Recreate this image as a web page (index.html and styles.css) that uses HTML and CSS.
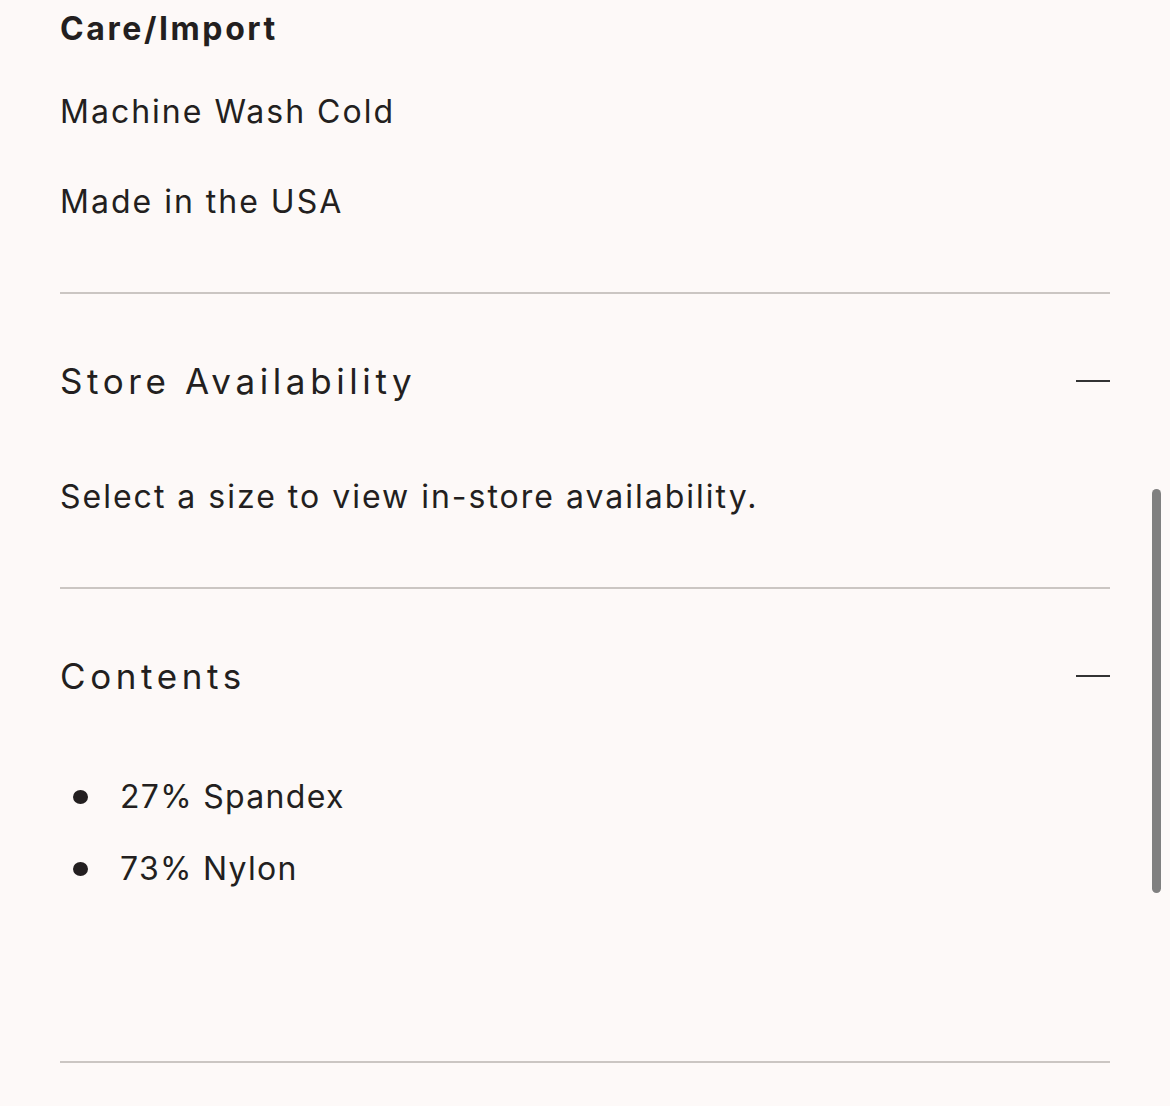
FILE: index.html
```html
<!DOCTYPE html>
<html>

<head>
    <title>Product details</title>
    <link rel="stylesheet" href="styles.css">
</head>

<body>
    <div class="details">
        <div class="care">
            <h4>Care/Import</h4>
            <p>Machine Wash Cold</p>
            <p>Made in the USA</p>
        </div>

        <div class="section">
            <div class="section-header">
                <h3>Store Availability</h3>
                <span class="minus"></span>
            </div>
            <p class="section-text">Select a size to view in-store availability.</p>
        </div>

        <div class="section contents">
            <div class="section-header">
                <h3>Contents</h3>
                <span class="minus"></span>
            </div>
            <ul class="fabric-list">
                <li>27% Spandex</li>
                <li>73% Nylon</li>
            </ul>
        </div>
    </div>

    <div class="scrollbar"></div>
</body>
</html>
```

FILE: styles.css
```css
body {
    font-family: Inter, "Liberation Sans", sans-serif;
    background-color: #fdf9f8;
    color: #231f20;
    margin: 0;
    padding: 0;
}

.details {
    padding: 9px 60px 0 60px;
}

.care,
.section {
    border-bottom: 2px solid #cbc6c3;
}

.care {
    padding-bottom: 70px;
}

.care h4 {
    font-size: 32px;
    line-height: 40px;
    font-weight: 700;
    letter-spacing: 2.6px;
    margin: 0 0 43px 0;
}

.care p {
    font-size: 32px;
    line-height: 40px;
    letter-spacing: 2px;
    margin: 0 0 50px 0;
}

.care p:last-child {
    margin-bottom: 0;
}

.section {
    padding-top: 65px;
    padding-bottom: 70px;
}

.section-header {
    display: flex;
    align-items: center;
    justify-content: space-between;
}

.section-header h3 {
    font-size: 35px;
    line-height: 44px;
    font-weight: 400;
    letter-spacing: 4.6px;
    margin: 0;
}

.minus {
    width: 34px;
    height: 2px;
    background-color: #333;
}

.section-text {
    font-size: 32px;
    line-height: 40px;
    letter-spacing: 2px;
    margin: 74px 0 0 0;
}

.contents {
    padding-bottom: 172px;
}

.fabric-list {
    list-style: none;
    margin: 79px 0 0 0;
    padding: 0;
}

.fabric-list li {
    position: relative;
    font-size: 32px;
    line-height: 40px;
    letter-spacing: 1.3px;
    padding-left: 60px;
    margin-bottom: 32px;
}

.fabric-list li:last-child {
    margin-bottom: 0;
}

.fabric-list li::before {
    content: "";
    position: absolute;
    left: 13px;
    top: 13px;
    width: 15px;
    height: 14px;
    border-radius: 50%;
    background-color: #231f20;
}

.scrollbar {
    position: fixed;
    left: 1152px;
    top: 489px;
    width: 9px;
    height: 404px;
    border-radius: 5px;
    background-color: #808080;
}
```
